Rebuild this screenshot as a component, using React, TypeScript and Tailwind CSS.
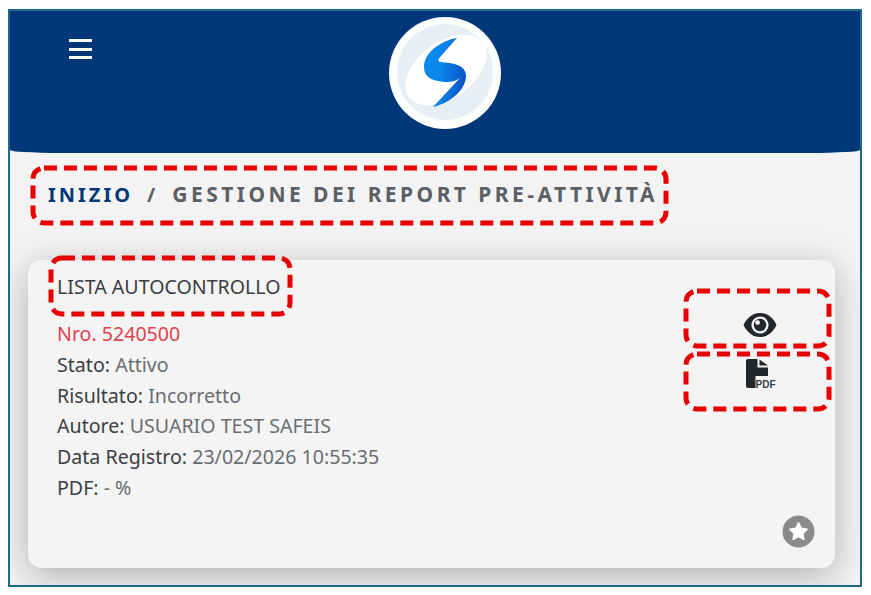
import type { ReactNode } from "react"

// red dashed marker drawn over the marked item
function Marker() {
  return (
    <svg className="absolute inset-[2.5px] h-[calc(100%-5px)] w-[calc(100%-5px)] overflow-visible" fill="none">
      <rect width="100%" height="100%" rx="11" stroke="#e80000" strokeWidth="5" strokeDasharray="13 7" />
    </svg>
  )
}

function Row({ label, children }: { label: string; children: ReactNode }) {
  return (
    <p className="h-[30.8px] leading-[30.8px] text-[#3c3f42]">
      {label} <span className="text-[#6a6d70]">{children}</span>
    </p>
  )
}

function Logo() {
  return (
    <svg width="112" height="112" viewBox="0 0 112 112">
      <defs>
        <linearGradient id="s-blue" x1="0" y1="0" x2="1" y2="0.15">
          <stop offset="0" stopColor="#0b8cf0" />
          <stop offset="0.5" stopColor="#0a84ea" />
          <stop offset="1" stopColor="#0b55c8" />
        </linearGradient>
      </defs>
      <circle cx="56" cy="56" r="56" fill="#fdfefe" />
      <circle cx="56" cy="55" r="48" fill="#e7eff4" />
      <ellipse cx="57" cy="53" rx="46" ry="28" transform="rotate(-36 57 53)" fill="#ffffff" />
      <path
        d="M68 20.7C52 24 35 35 35 50C35 62 46 64 56 65C62 65.5 67 64 71 61L44 90C62 86 77 72 77 59C77 47 62 46 52 45C50 45 49 44 49.5 42Z"
        fill="url(#s-blue)"
      />
    </svg>
  )
}

function EyeIcon() {
  return (
    <svg width="34" height="26" viewBox="0 0 34 26">
      <path d="M0.5 13C4 5.5 10 1 17 1C24 1 30 5.5 33.5 13C30 20.5 24 25 17 25C10 25 4 20.5 0.5 13Z" fill="#23272b" />
      <circle cx="17" cy="13" r="8.6" fill="#f4f4f4" />
      <circle cx="17" cy="13" r="6.2" fill="#23272b" />
      <circle cx="14.6" cy="10.6" r="2.4" fill="#f4f4f4" />
    </svg>
  )
}

function PdfIcon() {
  return (
    <svg width="30" height="30" viewBox="0 0 30 30">
      <path d="M2 0H11.5V8.5H22V17H9.5V29H2C0.9 29 0 28.1 0 27V2C0 0.9 0.9 0 2 0Z" fill="#23272b" />
      <path d="M13.5 0.5L22 6.5H13.5Z" fill="#23272b" />
      <text x="9.6" y="28.6" fontFamily="'Liberation Sans', sans-serif" fontWeight="700" fontSize="10" textLength="20" lengthAdjust="spacingAndGlyphs" fill="#3a3d40">
        PDF
      </text>
    </svg>
  )
}

function StarBadge() {
  return (
    <svg width="33" height="33" viewBox="0 0 33 33">
      <circle cx="16.5" cy="16.5" r="16" fill="#8b8b8b" />
      <path
        d="M16.5 7.8L19.2 13.3L25.2 14.2L20.8 18.4L21.9 24.4L16.5 21.6L11.1 24.4L12.2 18.4L7.8 14.2L13.8 13.3Z"
        fill="#ffffff"
        stroke="#ffffff"
        strokeWidth="1.5"
        strokeLinejoin="round"
      />
    </svg>
  )
}

export default function App() {
  return (
    <div className="h-[595px] w-[871px] overflow-hidden bg-white pl-2 pt-[9px] font-['Noto_Sans','Open_Sans',sans-serif]">
      <div className="flex h-[578px] w-[854px] flex-col overflow-hidden border-2 border-[#1d6a8a] bg-[#f3f3f3]">
        <header className="flex h-[142px] shrink-0 rounded-b-[50px_3px] bg-[#003778]">
          <div className="ml-[59px] mt-[28px] flex h-fit w-[23px] flex-col gap-[5.5px]">
            <span className="h-[3px] bg-white" />
            <span className="h-[3px] bg-white" />
            <span className="h-[3px] bg-white" />
          </div>
          <div className="ml-[297px] mt-[6px]">
            <Logo />
          </div>
        </header>

        <nav className="relative ml-[20px] mt-[12px] flex h-[60px] w-[638px] shrink-0 items-center whitespace-nowrap pl-[18px] text-[20px] font-bold tracking-[3px] text-[#5c5f63]">
          <a className="text-[#003778]">INIZIO</a>
          <span className="ml-[14px]">/</span>
          <span className="ml-[14px] text-[21px] tracking-[3.45px]">GESTIONE DEI REPORT PRE-ATTIVITÀ</span>
          <Marker />
        </nav>

        <section className="ml-[18px] mt-[35px] flex h-[308px] w-[807px] shrink-0 justify-between rounded-[14px] bg-[#f4f4f4] pl-[20px] pr-[4px] text-[19.6px] shadow-[0_8px_36px_rgba(0,0,0,0.28)]">
          <div>
            <h2 className="relative -mt-[5px] flex h-[61px] w-[244px] items-center whitespace-nowrap pl-[9px] pt-[3px] text-[#3a3c3f]">
              LISTA AUTOCONTROLLO
              <Marker />
            </h2>
            <div className="pl-[9px] pt-[3px]">
              <p className="h-[30.8px] leading-[30.8px] text-[#e0404f]">Nro. 5240500</p>
              <Row label="Stato:">Attivo</Row>
              <Row label="Risultato:">Incorretto</Row>
              <Row label="Autore:">USUARIO TEST SAFEIS</Row>
              <Row label="Data Registro:">23/02/2026 10:55:35</Row>
              <Row label="PDF:">- %</Row>
            </div>
          </div>

          <div className="flex w-[148px] flex-col pt-[28px]">
            <button className="relative flex h-[60px] items-center justify-center">
              <span className="ml-[6px] mt-[13px]">
                <EyeIcon />
              </span>
              <Marker />
            </button>
            <button className="relative mt-[3px] flex h-[60px] items-center justify-center">
              <span className="-mt-[15px] ml-[7px]">
                <PdfIcon />
              </span>
              <Marker />
            </button>
            <span className="mb-[20px] mr-[16px] mt-auto self-end">
              <StarBadge />
            </span>
          </div>
        </section>
      </div>
    </div>
  )
}
